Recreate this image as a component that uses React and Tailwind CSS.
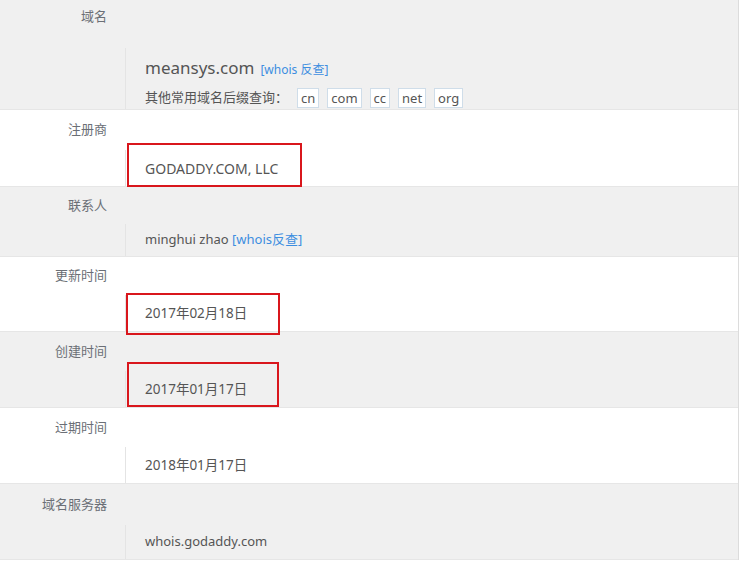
import React from "react";

const font = { fontFamily: '"Noto Sans", "Noto Sans CJK SC", sans-serif' };

function Row({ label, bg, labelH, valueH, children, box, rowH, valueClass = "justify-center", labelClass = "items-center" }) {
  return (
    <div className={`relative flex flex-col border-b border-[#e6e6e6] ${bg}`} style={{ height: rowH }}>
      <div className={`flex ${labelClass}`} style={{ height: labelH }}>
        <div className="w-[107px] text-right text-[13px] text-[#6b6f76]">{label}</div>
      </div>
      <div className={`ml-[125px] flex flex-col ${valueClass} border-l border-[#e4e4e4] pl-[19px]`} style={{ height: valueH }}>
        {children}
      </div>
      {box && (
        <div
          className="absolute z-10 border-2 border-[#d9161c]"
          style={{ left: box[0], top: box[1], width: box[2], height: box[3] }}
        />
      )}
    </div>
  );
}

const Val = ({ children, className = "text-[13px]" }) => <div className={`${className} text-[#555]`}>{children}</div>;

export default function App() {
  return (
    <div className="w-[740px] h-[567px] bg-white overflow-hidden" style={font}>
      <div className="w-[739px] border-r border-[#dcdcdc]">
        <Row label="域名" bg="bg-[#f0f0f0]" labelH={48} valueH={61} rowH={110} labelClass="items-start pt-[7px]" valueClass="justify-start pt-[8px]">
          <div className="flex items-baseline gap-[6px] leading-[23px]">
            <span className="text-[17px] text-[#555]">meansys.com</span>
            <span className="text-[12px] text-[#3d8ee0]">[whois 反查]</span>
          </div>
          <div className="flex items-center mt-[7px] text-[13px] text-[#555]">
            <span className="mr-[9px]">其他常用域名后缀查询：</span>
            {["cn", "com", "cc", "net", "org"].map((t) => (
              <span
                key={t}
                className="mr-[8px] border border-[#cfdde9] bg-white px-[3px] leading-[18px] text-[#555]"
              >
                {t}
              </span>
            ))}
          </div>
        </Row>
        <Row label="注册商" bg="bg-white" labelH={40} valueH={36} rowH={77} box={[127, 33, 175, 44]}>
          <Val className="text-[14px]">GODADDY.COM, LLC</Val>
        </Row>
        <Row label="联系人" bg="bg-[#f0f0f0]" labelH={37} valueH={32} rowH={70}>
          <Val>
            minghui zhao <span className="text-[#3d8ee0]">[whois反查]</span>
          </Val>
        </Row>
        <Row label="更新时间" bg="bg-white" labelH={38} valueH={36} rowH={75} box={[126, 36, 154, 42]}>
          <Val className="text-[13.5px]">2017年02月18日</Val>
        </Row>
        <Row label="创建时间" bg="bg-[#f0f0f0]" labelH={39} valueH={36} rowH={76} box={[127, 30, 152, 45]}>
          <Val className="text-[13.5px]">2017年01月17日</Val>
        </Row>
        <Row label="过期时间" bg="bg-white" labelH={39} valueH={36} rowH={76}>
          <Val className="text-[13.5px]">2018年01月17日</Val>
        </Row>
        <Row label="域名服务器" bg="bg-[#f0f0f0]" labelH={41} valueH={34} rowH={76}>
          <Val>whois.godaddy.com</Val>
        </Row>
      </div>
    </div>
  );
}
